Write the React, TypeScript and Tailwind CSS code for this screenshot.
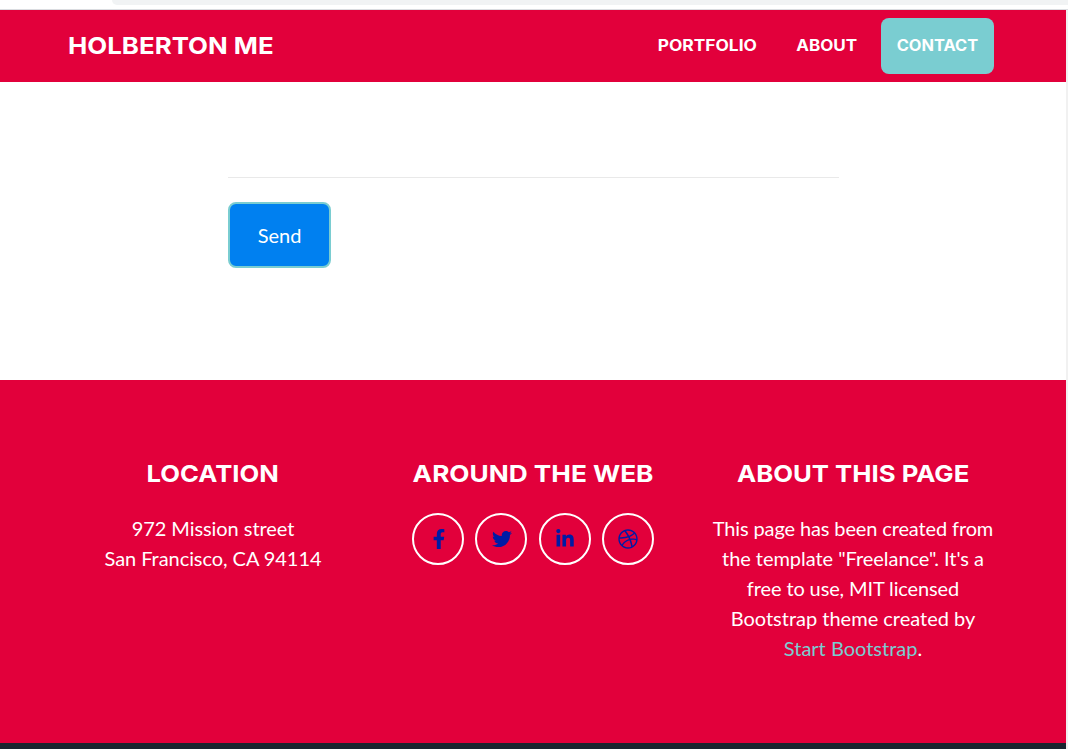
import type { ReactNode } from "react";
import { FaFacebookF, FaTwitter, FaLinkedinIn, FaDribbble } from "react-icons/fa";

const socials = [
  { label: "Facebook", icon: <FaFacebookF />, nudge: "pl-px" },
  { label: "Twitter", icon: <FaTwitter />, nudge: "pl-px" },
  { label: "LinkedIn", icon: <FaLinkedinIn />, nudge: "" },
  { label: "Dribbble", icon: <FaDribbble />, nudge: "" },
];

function FooterColumn({ title, stretch, children }: { title: string; stretch: string; children: ReactNode }) {
  return (
    <div className="flex w-[320px] flex-col items-center">
      <h4 className={`mb-[25px] whitespace-nowrap font-['Inter',sans-serif] text-[23.5px] font-bold leading-[29px] ${stretch}`}>
        {title}
      </h4>
      {children}
    </div>
  );
}

export default function App() {
  return (
    <div className="flex h-[749px] w-full flex-col overflow-hidden bg-white font-['Lato',sans-serif] text-white">
      <div className="flex h-[10px] shrink-0 flex-col items-end border-b border-[#dadce0]">
        <div className="h-[5px] w-[956px] rounded-bl-[14px] bg-[#f1f3f4]" />
      </div>
      <div className="flex flex-1">
        <div className="flex w-[1066px] flex-col">
          <header className="flex h-[72px] shrink-0 items-center justify-between bg-[#e2003b] pl-[68px] pr-[72px] font-['Inter',sans-serif] font-bold">
            <a className="origin-left scale-x-[1.1] text-[23.5px] leading-9">HOLBERTON ME</a>
            <nav className="flex items-center gap-2 text-[15.5px]">
              <a className="flex h-14 w-[131px] items-center justify-center pl-px">
                <span className="scale-x-[1.12]">PORTFOLIO</span>
              </a>
              <a className="flex h-14 w-[93px] items-center justify-center">
                <span className="scale-x-[1.1]">ABOUT</span>
              </a>
              <a className="flex h-14 w-[113px] items-center justify-center rounded-lg bg-[#7acdd1]">
                <span className="scale-x-[1.06]">CONTACT</span>
              </a>
            </nav>
          </header>
          <main className="flex h-[298px] shrink-0 flex-col items-start pl-[228px] pt-[95px]">
            <div className="mb-6 h-px w-[611px] bg-[#e9e9e9]" />
            <button className="h-[66px] w-[103px] rounded-lg border-2 border-[#7acdd1] bg-[#0080f0] text-xl">
              Send
            </button>
          </main>
          <footer className="flex h-[363px] shrink-0 justify-center bg-[#e2003b] pt-[79px] text-center text-xl leading-[30px]">
            <FooterColumn title="LOCATION" stretch="scale-x-[1.09]">
              <p className="tracking-[-0.06px]">
                972 Mission street
                <br />
                San Francisco, CA 94114
              </p>
            </FooterColumn>
            <FooterColumn title="AROUND THE WEB" stretch="scale-x-[1.115]">
              <div className="flex w-[242px] justify-between">
                {socials.map(({ label, icon, nudge }) => (
                  <a
                    key={label}
                    aria-label={label}
                    className={`flex size-[52px] items-center justify-center rounded-full border-2 border-white text-[20px] text-[#001ba5] ${nudge}`}
                  >
                    {icon}
                  </a>
                ))}
              </div>
            </FooterColumn>
            <FooterColumn title="ABOUT THIS PAGE" stretch="scale-x-[1.095]">
              <p className="whitespace-nowrap">
                <span className="tracking-[-0.13px]">This page has been created from</span>
                <br />
                <span className="tracking-[-0.04px]">the template "Freelance". It's a</span>
                <br />
                <span className="tracking-[-0.12px]">free to use, MIT licensed</span>
                <br />
                Bootstrap theme created by
                <br />
                <a className="text-[#7acdd1]">Start Bootstrap</a>.
              </p>
            </FooterColumn>
          </footer>
          <div className="h-1.5 shrink-0 bg-[#1a252f]" />
        </div>
        <div className="w-0.5 bg-[#f1f1f1]" />
      </div>
    </div>
  );
}
